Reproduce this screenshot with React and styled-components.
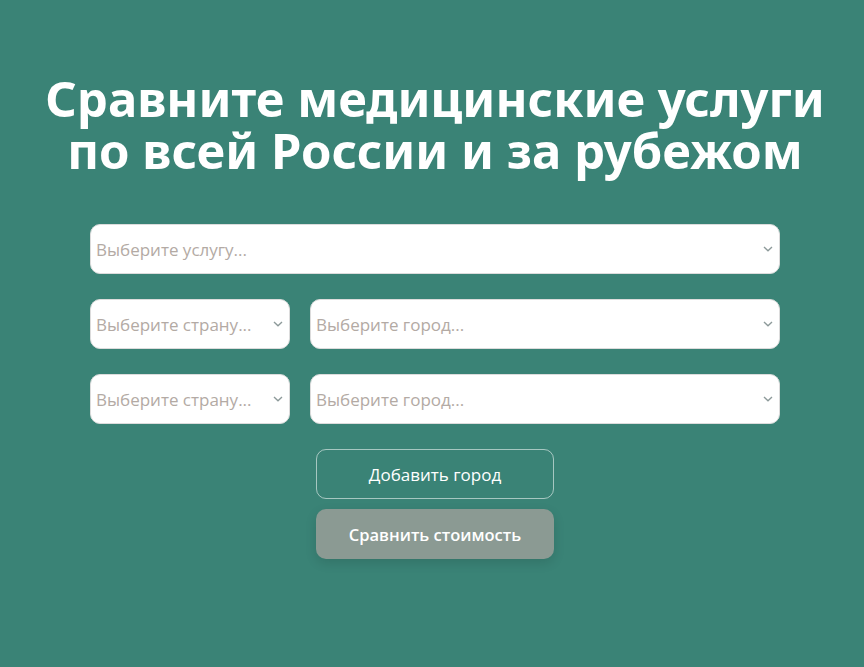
import React from "react";
import styled, { createGlobalStyle } from "styled-components";

const Global = createGlobalStyle`
  html, body { margin: 0; padding: 0; }
  body { background: #3a8376; font-family: "Open Sans", "Noto Sans", sans-serif; }
  * { box-sizing: border-box; }
`;

const Page = styled.main`
  min-height: 667px;
  display: flex;
  flex-direction: column;
  align-items: center;
  padding: 72px 0 0 6px;
`;

const Title = styled.h1`
  margin: 0 0 48px;
  display: flex;
  flex-direction: column;
  align-items: center;
  font-family: "Noto Sans", "Open Sans", sans-serif;
  font-weight: 700;
  font-size: 49px;
  line-height: 52px;
  color: #ffffff;
  text-align: center;
`;

const TitleLine = styled.span`
  display: block;
  white-space: nowrap;
`;

const Form = styled.form`
  width: 690px;
  display: flex;
  flex-direction: column;
  gap: 25px;
`;

const Row = styled.div`
  display: grid;
  grid-template-columns: 200px 1fr;
  gap: 20px;
`;

const SelectWrap = styled.div`
  position: relative;
  height: 50px;
  background: #ffffff;
  border: 1px solid #dcdcdc;
  border-radius: 10px;
  display: flex;
  align-items: center;
`;

const Select = styled.select`
  appearance: none;
  width: 100%;
  height: 100%;
  border: none;
  background: transparent;
  padding: 0 28px 0 5px;
  font-family: "Open Sans", "Noto Sans", sans-serif;
  font-size: 17px;
  color: #b3aaa4;
  outline: none;
  white-space: nowrap;
  overflow: hidden;
  text-overflow: ellipsis;
`;

const Chevron = styled.svg`
  position: absolute;
  right: 6px;
  top: 50%;
  transform: translateY(-50%);
  pointer-events: none;
`;

const Actions = styled.div`
  display: flex;
  flex-direction: column;
  align-items: center;
  gap: 10px;
`;

const Button = styled.button`
  width: 238px;
  height: 50px;
  border-radius: 10px;
  font-family: "Open Sans", "Noto Sans", sans-serif;
  font-size: ${(p) => (p.$outline ? "17px" : "16.5px")};
  cursor: pointer;
  color: #ffffff;
  border: 1px solid ${(p) => (p.$outline ? "rgba(255,255,255,0.55)" : "transparent")};
  background: ${(p) => (p.$outline ? "transparent" : "#8b9a93")};
  box-shadow: ${(p) => (p.$outline ? "none" : "0 4px 12px rgba(0,0,0,0.12)")};
  font-weight: ${(p) => (p.$outline ? 400 : 600)};
`;

function Dropdown({ placeholder }) {
  return (
    <SelectWrap>
      <Select defaultValue="">
        <option value="" disabled>{placeholder}</option>
      </Select>
      <Chevron width="10" height="7" viewBox="0 0 10 7">
        <path d="M1 1.5 L5 5.2 L9 1.5" fill="none" stroke="#8d9a9a" strokeWidth="1.4" />
      </Chevron>
    </SelectWrap>
  );
}

export default function App() {
  return (
    <>
      <Global />
      <Page>
        <Title>
          <TitleLine>Сравните медицинские услуги</TitleLine>
          <TitleLine>по всей России и за рубежом</TitleLine>
        </Title>
        <Form onSubmit={(e) => e.preventDefault()}>
          <Dropdown placeholder="Выберите услугу..." />
          <Row>
            <Dropdown placeholder="Выберите страну..." />
            <Dropdown placeholder="Выберите город..." />
          </Row>
          <Row>
            <Dropdown placeholder="Выберите страну..." />
            <Dropdown placeholder="Выберите город..." />
          </Row>
          <Actions>
            <Button type="button" $outline>Добавить город</Button>
            <Button type="submit">Сравнить стоимость</Button>
          </Actions>
        </Form>
      </Page>
    </>
  );
}
